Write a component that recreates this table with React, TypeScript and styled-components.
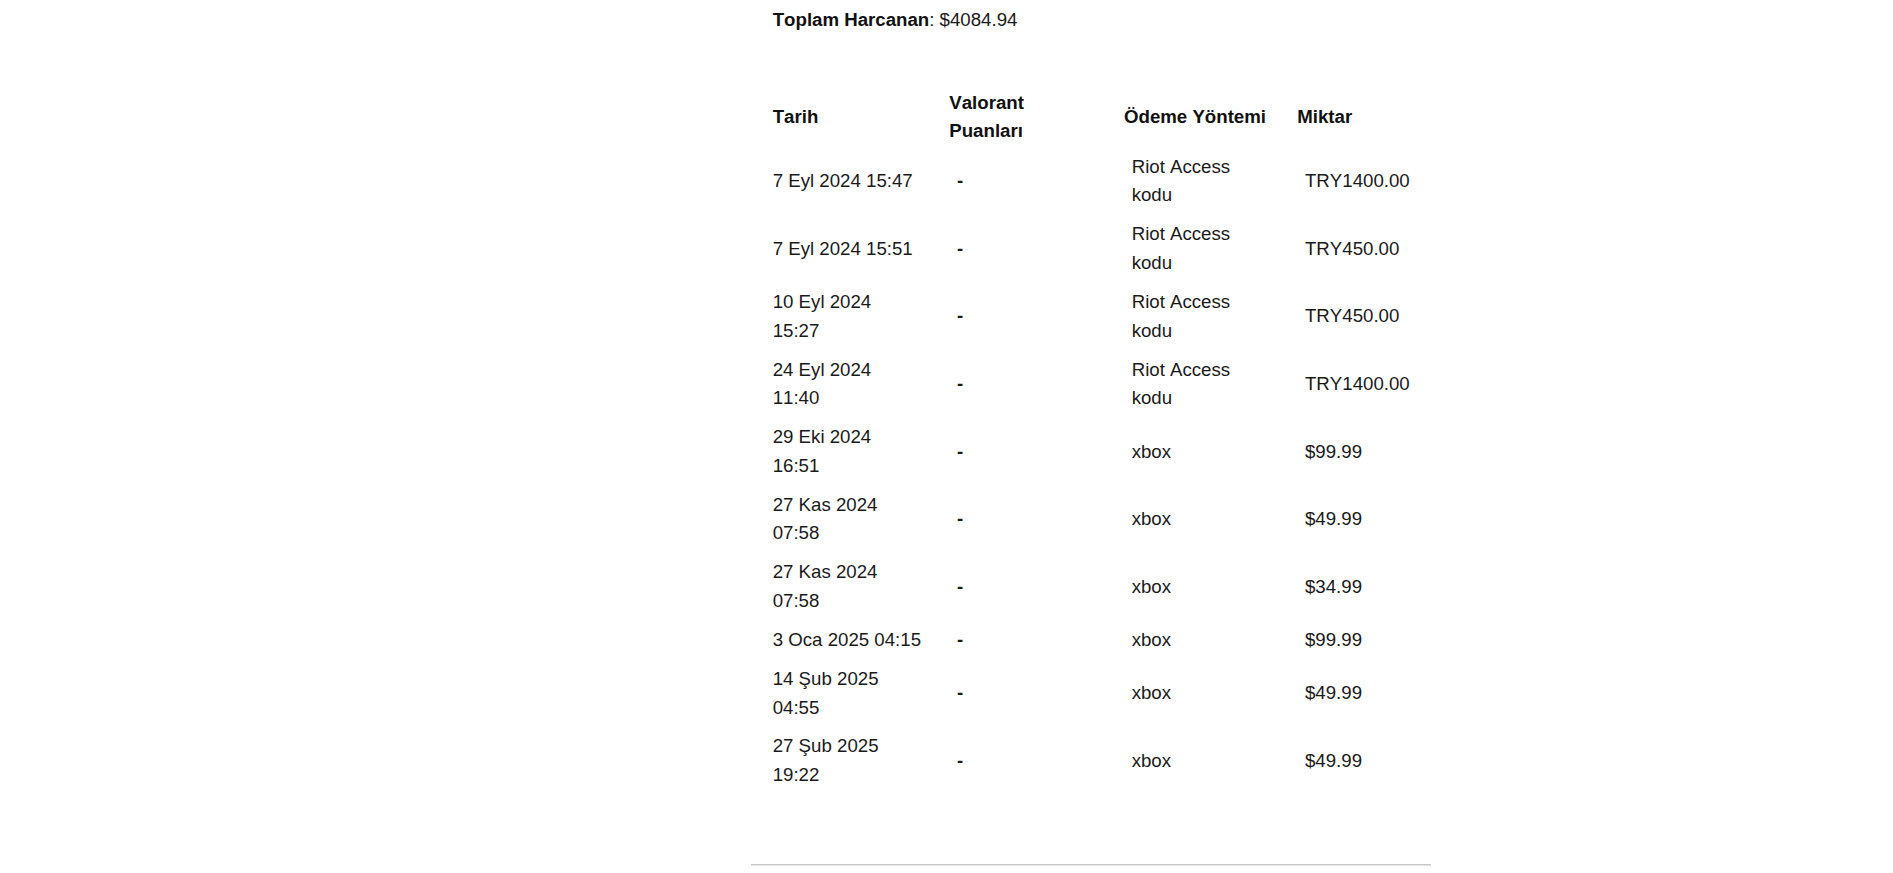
import React from 'react';
import styled, { createGlobalStyle } from 'styled-components';

type Purchase = {
  date: string;
  points: string;
  method: string;
  amount: string;
};

const GlobalStyle = createGlobalStyle`
  html, body {
    margin: 0;
    padding: 0;
    background: #ffffff;
  }
  body {
    font-family: 'Liberation Sans', Arial, Helvetica, sans-serif;
    font-size: 18.66px;
    line-height: 28.7px;
    font-kerning: none;
    color: #1a1a1a;
  }
`;

const Shell = styled.div`
  display: grid;
  grid-template-columns: 751px 680px 1fr;
  min-height: 873px;
`;

const Main = styled.main`
  grid-column: 2;
  display: flex;
  flex-direction: column;
`;

const Content = styled.section`
  padding: 6.4px 21.7px 0;
`;

const Total = styled.div`
  margin: 0;
`;

const Label = styled.strong`
  font-weight: 700;
  color: #111111;
`;

const HistoryTable = styled.table`
  width: 100%;
  margin-top: 52.2px;
  border-collapse: collapse;
  border-spacing: 0;
  table-layout: fixed;
`;

const HeadCell = styled.th<{ $width?: number }>`
  box-sizing: border-box;
  width: ${(p) => (p.$width ? `${p.$width}px` : 'auto')};
  padding: 1.5px 25px 1.5px 0;
  text-align: left;
  vertical-align: middle;
  font-weight: 700;
  color: #111111;

  &:first-child {
    padding-right: 27.4px;
  }
  &:last-child {
    padding-right: 0;
  }
`;

const Cell = styled.td`
  box-sizing: border-box;
  padding: 5.1px 25px 5.1px 7.7px;
  text-align: left;
  vertical-align: middle;

  &:first-child {
    padding-left: 0;
    padding-right: 27.4px;
  }
  &:last-child {
    padding-right: 0;
  }
`;

const Dash = styled.span`
  font-weight: 700;
`;

const Divider = styled.hr`
  margin: 69px 0 0;
  height: 0;
  border: none;
  border-top: 1px solid #c9c9c9;
  border-bottom: 1px solid #e3e3e3;
`;

const purchases: Purchase[] = [
  { date: '7 Eyl 2024 15:47', points: '-', method: 'Riot Access kodu', amount: 'TRY1400.00' },
  { date: '7 Eyl 2024 15:51', points: '-', method: 'Riot Access kodu', amount: 'TRY450.00' },
  { date: '10 Eyl 2024 15:27', points: '-', method: 'Riot Access kodu', amount: 'TRY450.00' },
  { date: '24 Eyl 2024 11:40', points: '-', method: 'Riot Access kodu', amount: 'TRY1400.00' },
  { date: '29 Eki 2024 16:51', points: '-', method: 'xbox', amount: '$99.99' },
  { date: '27 Kas 2024 07:58', points: '-', method: 'xbox', amount: '$49.99' },
  { date: '27 Kas 2024 07:58', points: '-', method: 'xbox', amount: '$34.99' },
  { date: '3 Oca 2025 04:15', points: '-', method: 'xbox', amount: '$99.99' },
  { date: '14 Şub 2025 04:55', points: '-', method: 'xbox', amount: '$49.99' },
  { date: '27 Şub 2025 19:22', points: '-', method: 'xbox', amount: '$49.99' },
];

const App: React.FC = () => {
  return (
    <>
      <GlobalStyle />
      <Shell>
        <aside />
        <Main>
          <Content>
            <Total>
              <Label>Toplam Harcanan</Label>: $4084.94
            </Total>
            <HistoryTable>
              <thead>
                <tr>
                  <HeadCell $width={176.6}>Tarih</HeadCell>
                  <HeadCell $width={174.7}>Valorant Puanları</HeadCell>
                  <HeadCell $width={173.3}>Ödeme Yöntemi</HeadCell>
                  <HeadCell>Miktar</HeadCell>
                </tr>
              </thead>
              <tbody>
                {purchases.map((row, i) => (
                  <tr key={i}>
                    <Cell>{row.date}</Cell>
                    <Cell>
                      <Dash>{row.points}</Dash>
                    </Cell>
                    <Cell>{row.method}</Cell>
                    <Cell>{row.amount}</Cell>
                  </tr>
                ))}
              </tbody>
            </HistoryTable>
          </Content>
          <Divider />
        </Main>
      </Shell>
    </>
  );
};

export default App;
